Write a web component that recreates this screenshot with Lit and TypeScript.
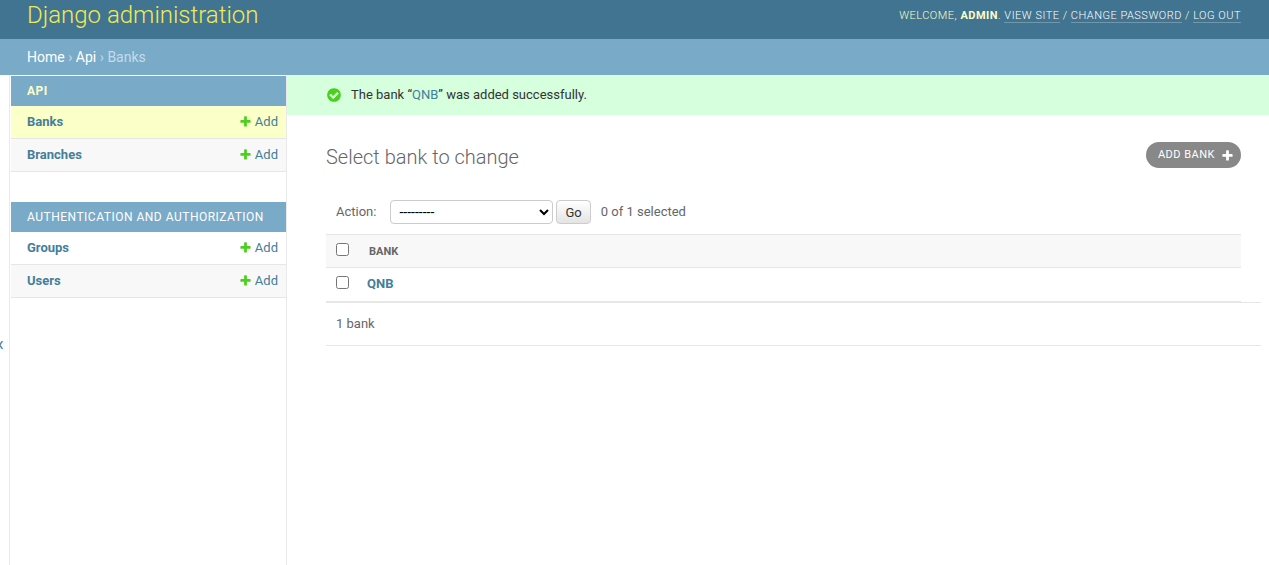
import { LitElement, html, css } from "lit";
import { customElement, property, state } from "lit/decorators.js";

interface NavModel {
  name: string;
  current?: boolean;
}

interface NavApp {
  caption: string;
  current?: boolean;
  models: NavModel[];
}

const apps: NavApp[] = [
  { caption: "API", current: true, models: [{ name: "Banks", current: true }, { name: "Branches" }] },
  { caption: "Authentication and Authorization", models: [{ name: "Groups" }, { name: "Users" }] },
];

const plusPath =
  "M1600 796v192q0 40-28 68t-68 28h-416v416q0 40-28 68t-68 28h-192q-40 0-68-28t-28-68v-416h-416q-40 0-68-28t-28-68v-192q0-40 28-68t68-28h416v-416q0-40 28-68t68-28h192q40 0 68 28t28 68v416h416q40 0 68 28t28 68z";

const linkStyles = css`
  a {
    color: #447e9b;
    text-decoration: none;
  }
  a:hover {
    color: #036;
  }
`;

@customElement("admin-header")
class AdminHeader extends LitElement {
  static styles = css`
    .header {
      display: flex;
      justify-content: space-between;
      align-items: flex-start;
      height: 39px;
      box-sizing: border-box;
      padding: 0 28px 0 27px;
      background: #417490;
      color: #fbffc8;
    }
    .brand {
      margin: 0;
      font-size: 24px;
      line-height: 30px;
      font-weight: 300;
    }
    .brand a {
      color: #f0ea52;
      text-decoration: none;
    }
    .tools {
      padding-top: 8px;
      font-size: 11px;
      line-height: 15px;
      font-weight: 300;
      letter-spacing: 0.5px;
      text-transform: uppercase;
    }
    .tools strong {
      font-weight: 700;
    }
    .tools a {
      color: #fff;
      text-decoration: none;
      border-bottom: 1px solid rgba(255, 255, 255, 0.25);
    }
  `;

  render() {
    return html`<header class="header">
      <h1 class="brand"><a href="#">Django administration</a></h1>
      <div class="tools">
        Welcome, <strong>admin</strong>. <a href="#">View site</a> / <a href="#">Change password</a> /
        <a href="#">Log out</a>
      </div>
    </header>`;
  }
}

@customElement("admin-breadcrumbs")
class AdminBreadcrumbs extends LitElement {
  static styles = css`
    .crumbs {
      padding: 10px 28px 10px 27px;
      background: #79aac8;
      color: #c4dce8;
      font-size: 14px;
      line-height: 16px;
    }
    .crumbs a {
      color: #fff;
      text-decoration: none;
    }
  `;

  render() {
    return html`<nav class="crumbs" aria-label="Breadcrumbs">
      <a href="#">Home</a> › <a href="#">Api</a> › Banks
    </nav>`;
  }
}

@customElement("admin-sidebar")
class AdminSidebar extends LitElement {
  static styles = [
    linkStyles,
    css`
      :host {
        display: flex;
        flex: none;
      }
      .toggle {
        display: flex;
        align-items: center;
        justify-content: flex-end;
        width: 10px;
        padding: 48px 5px 0 0;
        border: 0;
        border-right: 1px solid #eaeaea;
        background: #fff;
        color: #447e9b;
        font: 20px/24px Roboto, sans-serif;
        overflow: hidden;
        cursor: pointer;
      }
      .panel {
        width: 277px;
        box-sizing: border-box;
        padding: 1px 0 0 1px;
        border-right: 1px solid #eaeaea;
      }
      .module {
        width: 100%;
        margin-bottom: 30px;
        border-collapse: collapse;
      }
      caption {
        padding: 8px 16px;
        background: #79aac8;
        color: #fff;
        font-size: 12px;
        line-height: 14px;
        letter-spacing: 0.5px;
        text-align: left;
        text-transform: uppercase;
      }
      caption a {
        color: #fff;
      }
      caption .current {
        color: #fbffc8;
        font-weight: 700;
      }
      th,
      td {
        padding: 8px;
        border-bottom: 1px solid #e6e6e6;
        font-size: 13px;
        line-height: 16px;
        text-align: left;
      }
      th {
        padding-left: 16px;
      }
      td {
        text-align: right;
      }
      tr:nth-child(even) {
        background: #f8f8f8;
      }
      tr.current {
        background: #fbffc8;
      }
      .add {
        display: inline-flex;
        align-items: flex-start;
        gap: 3px;
        vertical-align: top;
      }
      .add svg {
        width: 13px;
        height: 13px;
        margin-top: 1px;
        fill: #4cd01f;
      }
    `,
  ];

  @state() private open = true;

  render() {
    return html`
      <button class="toggle" aria-label="Toggle navigation" @click=${() => (this.open = !this.open)}>
        ${this.open ? "«" : "»"}
      </button>
      ${this.open
        ? html`<nav class="panel">
            ${apps.map(
              (app) => html`<table class="module">
                <caption>
                  <a href="#" class=${app.current ? "current" : ""}>${app.caption}</a>
                </caption>
                <tbody>
                  ${app.models.map(
                    (m) => html`<tr class=${m.current ? "current" : ""}>
                      <th scope="row"><a href="#">${m.name}</a></th>
                      <td>
                        <a class="add" href="#"
                          ><svg viewBox="0 0 1792 1792" aria-hidden="true"><path d=${plusPath} /></svg>Add</a
                        >
                      </td>
                    </tr>`
                  )}
                </tbody>
              </table>`
            )}
          </nav>`
        : null}
    `;
  }
}

@customElement("admin-message")
class AdminMessage extends LitElement {
  static styles = [
    linkStyles,
    css`
      .message {
        display: flex;
        align-items: center;
        gap: 9px;
        padding: 12px 28px 12px 39px;
        background: #d5ffdd;
        color: #333;
        font-size: 13px;
        line-height: 16px;
      }
      svg {
        width: 16px;
        height: 16px;
        fill: #4cd01f;
      }
    `,
  ];
  @property() name = "";

  render() {
    return html`<div class="message" role="status">
      <svg viewBox="0 0 1792 1792" aria-hidden="true">
        <path
          d="M1412 734q0-28-18-46l-91-90q-19-19-45-19t-45 19l-408 407-226-226q-19-19-45-19t-45 19l-91 90q-18 18-18 46 0 27 18 45l362 362q19 19 45 19 27 0 46-19l543-543q18-18 18-45zm252 162q0 209-103 385.500t-279.500 279.500-385.500 103-385.500-103-279.500-279.500-103-385.500 103-385.500 279.500-279.500 385.500-103 385.500 103 279.500 279.500 103 385.500z"
        />
      </svg>
      <span>The bank “<a href="#">${this.name}</a>” was added successfully.</span>
    </div>`;
  }
}

@customElement("admin-changelist")
class AdminChangelist extends LitElement {
  static styles = [
    linkStyles,
    css`
      .content {
        padding: 27px 28px 40px 39px;
        color: #666;
        font-size: 13px;
        line-height: 16px;
      }
      .heading {
        display: flex;
        justify-content: space-between;
        align-items: flex-start;
      }
      h2 {
        margin: 0;
        padding-top: 3px;
        font-size: 20px;
        line-height: 24px;
        font-weight: 300;
      }
      .add-link {
        display: flex;
        align-items: flex-start;
        gap: 6px;
        padding: 5px 7px 5px 12px;
        border-radius: 15px;
        background: #888;
        color: #fff;
        font-size: 11px;
        line-height: 16px;
        letter-spacing: 0.5px;
        text-transform: uppercase;
      }
      .add-link:hover {
        background: #417690;
        color: #fff;
      }
      .add-link svg {
        width: 13px;
        height: 13px;
        margin-top: 2px;
        fill: #fff;
      }
      .actions {
        display: flex;
        align-items: center;
        padding: 31px 10px 10px;
      }
      select {
        width: 163px;
        height: 24px;
        margin: 0 3px 0 14px;
        padding: 0 4px;
        border: 1px solid #ccc;
        border-radius: 4px;
        background: #fff;
        color: #000;
        font: 14px Roboto, sans-serif;
      }
      .go {
        height: 24px;
        margin-right: 10px;
        padding: 2px 8px 0;
        border: 1px solid #ccc;
        border-radius: 4px;
        background: linear-gradient(#fff, #e4e4e4);
        color: #333;
        font: 13px/20px Roboto, sans-serif;
      }
      .results {
        width: 100%;
        border-collapse: separate;
        border-spacing: 0;
      }
      th,
      td {
        padding: 8px;
        border-bottom: 1px solid #e6e6e6;
        line-height: 16px;
        text-align: left;
        vertical-align: top;
      }
      thead th {
        border-top: 1px solid #e6e6e6;
        background: #f8f8f8;
        font-size: 11px;
      }
      .results .label {
        padding: 9px 8px 7px 10px;
        text-transform: uppercase;
      }
      tbody th {
        padding-bottom: 9px;
      }
      .results .pick {
        width: 15px;
        padding: 8px 8px 8px 10px;
      }
      .pick input {
        display: block;
        width: 13px;
        height: 13px;
        margin: 0;
      }
      .paginator {
        margin: 0 -20px 0 0;
        padding: 13px 10px;
        border-top: 1px solid #e6e6e6;
        border-bottom: 1px solid #e6e6e6;
      }
    `,
  ];
  @property({ attribute: false }) rows: string[] = [];
  @state() private picked = new Set<string>();

  private toggle(name: string) {
    const next = new Set(this.picked);
    next.has(name) ? next.delete(name) : next.add(name);
    this.picked = next;
  }

  private toggleAll(e: Event) {
    this.picked = new Set((e.target as HTMLInputElement).checked ? this.rows : []);
  }

  render() {
    return html`<main class="content">
      <div class="heading">
        <h2>Select bank to change</h2>
        <a class="add-link" href="#"
          >Add bank<svg viewBox="0 0 1792 1792" aria-hidden="true"><path d=${plusPath} /></svg
        ></a>
      </div>
      <form @submit=${(e: Event) => e.preventDefault()}>
        <div class="actions">
          <label for="action">Action:</label>
          <select id="action">
            <option>---------</option>
            <option>Delete selected banks</option>
          </select>
          <button class="go" type="submit">Go</button>
          <span>${this.picked.size} of ${this.rows.length} selected</span>
        </div>
        <table class="results">
          <thead>
            <tr>
              <th class="pick" scope="col">
                <input
                  type="checkbox"
                  aria-label="Select all banks"
                  .checked=${this.picked.size === this.rows.length}
                  @change=${this.toggleAll}
                />
              </th>
              <th class="label" scope="col">Bank</th>
            </tr>
          </thead>
          <tbody>
            ${this.rows.map(
              (name) => html`<tr>
                <td class="pick">
                  <input
                    type="checkbox"
                    aria-label=${"Select " + name}
                    .checked=${this.picked.has(name)}
                    @change=${() => this.toggle(name)}
                  />
                </td>
                <th scope="row"><a href="#">${name}</a></th>
              </tr>`
            )}
          </tbody>
        </table>
        <div class="paginator">${this.rows.length} bank</div>
      </form>
    </main>`;
  }
}

@customElement("app-root")
class AppRoot extends LitElement {
  static styles = css`
    :host {
      display: flex;
      flex-direction: column;
      min-height: 100vh;
      background: #fff;
      color: #333;
      font-family: Roboto, "Liberation Sans", sans-serif;
      font-size: 13px;
    }
    .main {
      display: flex;
      flex: 1;
    }
    .column {
      flex: 1;
      min-width: 0;
    }
  `;

  render() {
    return html`
      <admin-header></admin-header>
      <admin-breadcrumbs></admin-breadcrumbs>
      <div class="main">
        <admin-sidebar></admin-sidebar>
        <div class="column">
          <admin-message name="QNB"></admin-message>
          <admin-changelist .rows=${["QNB"]}></admin-changelist>
        </div>
      </div>
    `;
  }
}
